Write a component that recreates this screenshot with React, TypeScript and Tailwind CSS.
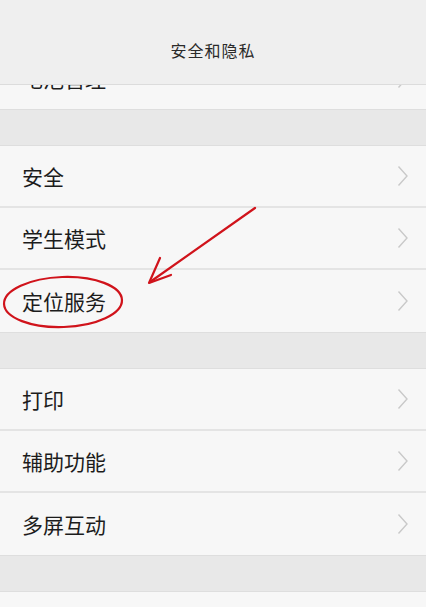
const font = { fontFamily: '"Noto Sans CJK SC", "Noto Sans", sans-serif' };

function Chevron() {
  return (
    <svg width="12" height="22" viewBox="0 0 12 22" className="shrink-0">
      <path d="M1.5 1.5 L10 11 L1.5 20.5" fill="none" stroke="#c9c9c9" strokeWidth="1.4" />
    </svg>
  );
}

function Row({ label, last }: { label: string; last?: boolean }) {
  return (
    <div
      className={`flex h-[62px] items-center justify-between bg-[#f7f7f7] pl-[22px] pr-[17px] ${
        last ? "" : "border-b-2 border-[#e4e4e4]"
      }`}
    >
      <span className="text-[21px] leading-none text-[#1c1c1c]">{label}</span>
      <Chevron />
    </div>
  );
}

function Group({ items }: { items: string[] }) {
  return (
    <div className="border-y border-[#dedede]">
      {items.map((item, i) => (
        <Row key={item} label={item} last={i === items.length - 1} />
      ))}
    </div>
  );
}

export default function App() {
  return (
    <div className="relative h-[607px] w-[426px] overflow-hidden bg-[#e8e8e8]" style={font}>
      <div className="flex h-[85px] items-center justify-center border-b border-[#dcdcdc] bg-[#efefef] pt-[16px]">
        <span className="text-[16px] tracking-[1px] text-[#2a2a2a]">安全和隐私</span>
      </div>

      <div className="flex h-[25px] flex-col justify-end overflow-hidden border-b border-[#dedede]">
        <div className="flex h-[62px] shrink-0 items-center justify-between bg-[#f7f7f7] pl-[22px] pr-[17px]">
          <span className="text-[21px] leading-none text-[#1c1c1c]">电池管理</span>
          <Chevron />
        </div>
      </div>

      <div className="h-[35px]" />
      <Group items={["安全", "学生模式", "定位服务"]} />
      <div className="h-[35px]" />
      <Group items={["打印", "辅助功能", "多屏互动"]} />
      <div className="h-[35px]" />
      <div className="h-[62px] border-t border-[#dedede] bg-[#f7f7f7]" />

      <svg className="pointer-events-none absolute left-0 top-0" width="426" height="607">
        <ellipse cx="63" cy="302" rx="59" ry="25" fill="none" stroke="#d0131b" strokeWidth="2.2" transform="rotate(-2 63 302)" />
        <path d="M255 208 L150 282" fill="none" stroke="#d0131b" strokeWidth="2.2" strokeLinecap="round" />
        <path d="M160 258 L149 283 L171 275" fill="none" stroke="#d0131b" strokeWidth="2.2" strokeLinecap="round" strokeLinejoin="round" />
      </svg>
    </div>
  );
}
